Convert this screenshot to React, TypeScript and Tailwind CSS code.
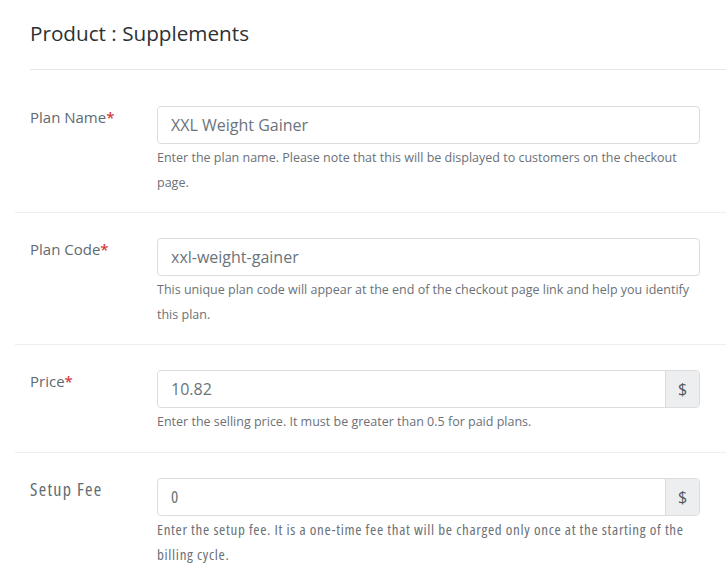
import React from "react";

type Row = {
  label: string;
  required: boolean;
  value: string;
  addon?: boolean;
  help: string[];
  condensed?: boolean;
};

const rows: Row[] = [
  {
    label: "Plan Name",
    required: true,
    value: "XXL Weight Gainer",
    help: [
      "Enter the plan name. Please note that this will be displayed to customers on the checkout",
      "page.",
    ],
  },
  {
    label: "Plan Code",
    required: true,
    value: "xxl-weight-gainer",
    help: [
      "This unique plan code will appear at the end of the checkout page link and help you identify",
      "this plan.",
    ],
  },
  {
    label: "Price",
    required: true,
    value: "10.82",
    addon: true,
    help: ["Enter the selling price. It must be greater than 0.5 for paid plans."],
  },
  {
    label: "Setup Fee",
    required: false,
    value: "0",
    addon: true,
    condensed: true,
    help: [
      "Enter the setup fee. It is a one-time fee that will be charged only once at the starting of the",
      "billing cycle.",
    ],
  },
];

export default function App() {
  return (
    <div
      className="w-[726px] h-[581px] overflow-hidden bg-white"
      style={{ fontFamily: "'Open Sans', Lato, sans-serif" }}
    >
      <div className="ml-[30px] h-[70px] border-b border-[#e4e6e8]">
        <h1 className="pt-[19px] text-[20.7px] leading-[28px] text-[#2c3135] font-normal">
          Product : Supplements
        </h1>
      </div>
      <div className="ml-[15px] mt-[11px]">
        {rows.map((r) => (
          <div
            key={r.label}
            className={
              r.help.length === 1
                ? "flex border-b border-[#eceef0] pt-[25px] pb-[18px] pl-[15px]"
                : "flex border-b border-[#eceef0] pt-[25px] pb-[17px] pl-[15px]"
            }
          >
            <div
              className="w-[127px] shrink-0 pt-[1px] leading-[20px] text-[#5e6a72]"
              style={
                r.condensed
                  ? { fontSize: "18px", fontStretch: "75%", letterSpacing: "1.3px" }
                  : { fontSize: "15px" }
              }
            >
              {r.label}
              {r.required && <span className="text-[#d63c48] font-semibold">*</span>}
            </div>
            <div className="w-[543px]">
              <div className="flex h-[38px] rounded-[4px] border border-[#dadcde] overflow-hidden">
                <div
                  className="flex-1 flex items-center pl-[13px] text-[#6a747b]"
                  style={
                    r.condensed
                      ? { fontSize: "17px", fontStretch: "75%" }
                      : { fontSize: "16px" }
                  }
                >
                  {r.value}
                </div>
                {r.addon && (
                  <div className="w-[34px] flex items-center justify-center bg-[#eceef0] border-l border-[#dadcde] text-[16px] text-[#50565b]">
                    $
                  </div>
                )}
              </div>
              <div
                className="mt-[1px] leading-[25px] text-[#6b7177]"
                style={
                  r.condensed
                    ? { fontSize: "15px", fontStretch: "75%", letterSpacing: "0.68px" }
                    : { fontSize: "12.5px" }
                }
              >
                {r.help.map((h, i) => (
                  <div key={i} className="whitespace-nowrap">
                    {h}
                  </div>
                ))}
              </div>
            </div>
          </div>
        ))}
      </div>
    </div>
  );
}
